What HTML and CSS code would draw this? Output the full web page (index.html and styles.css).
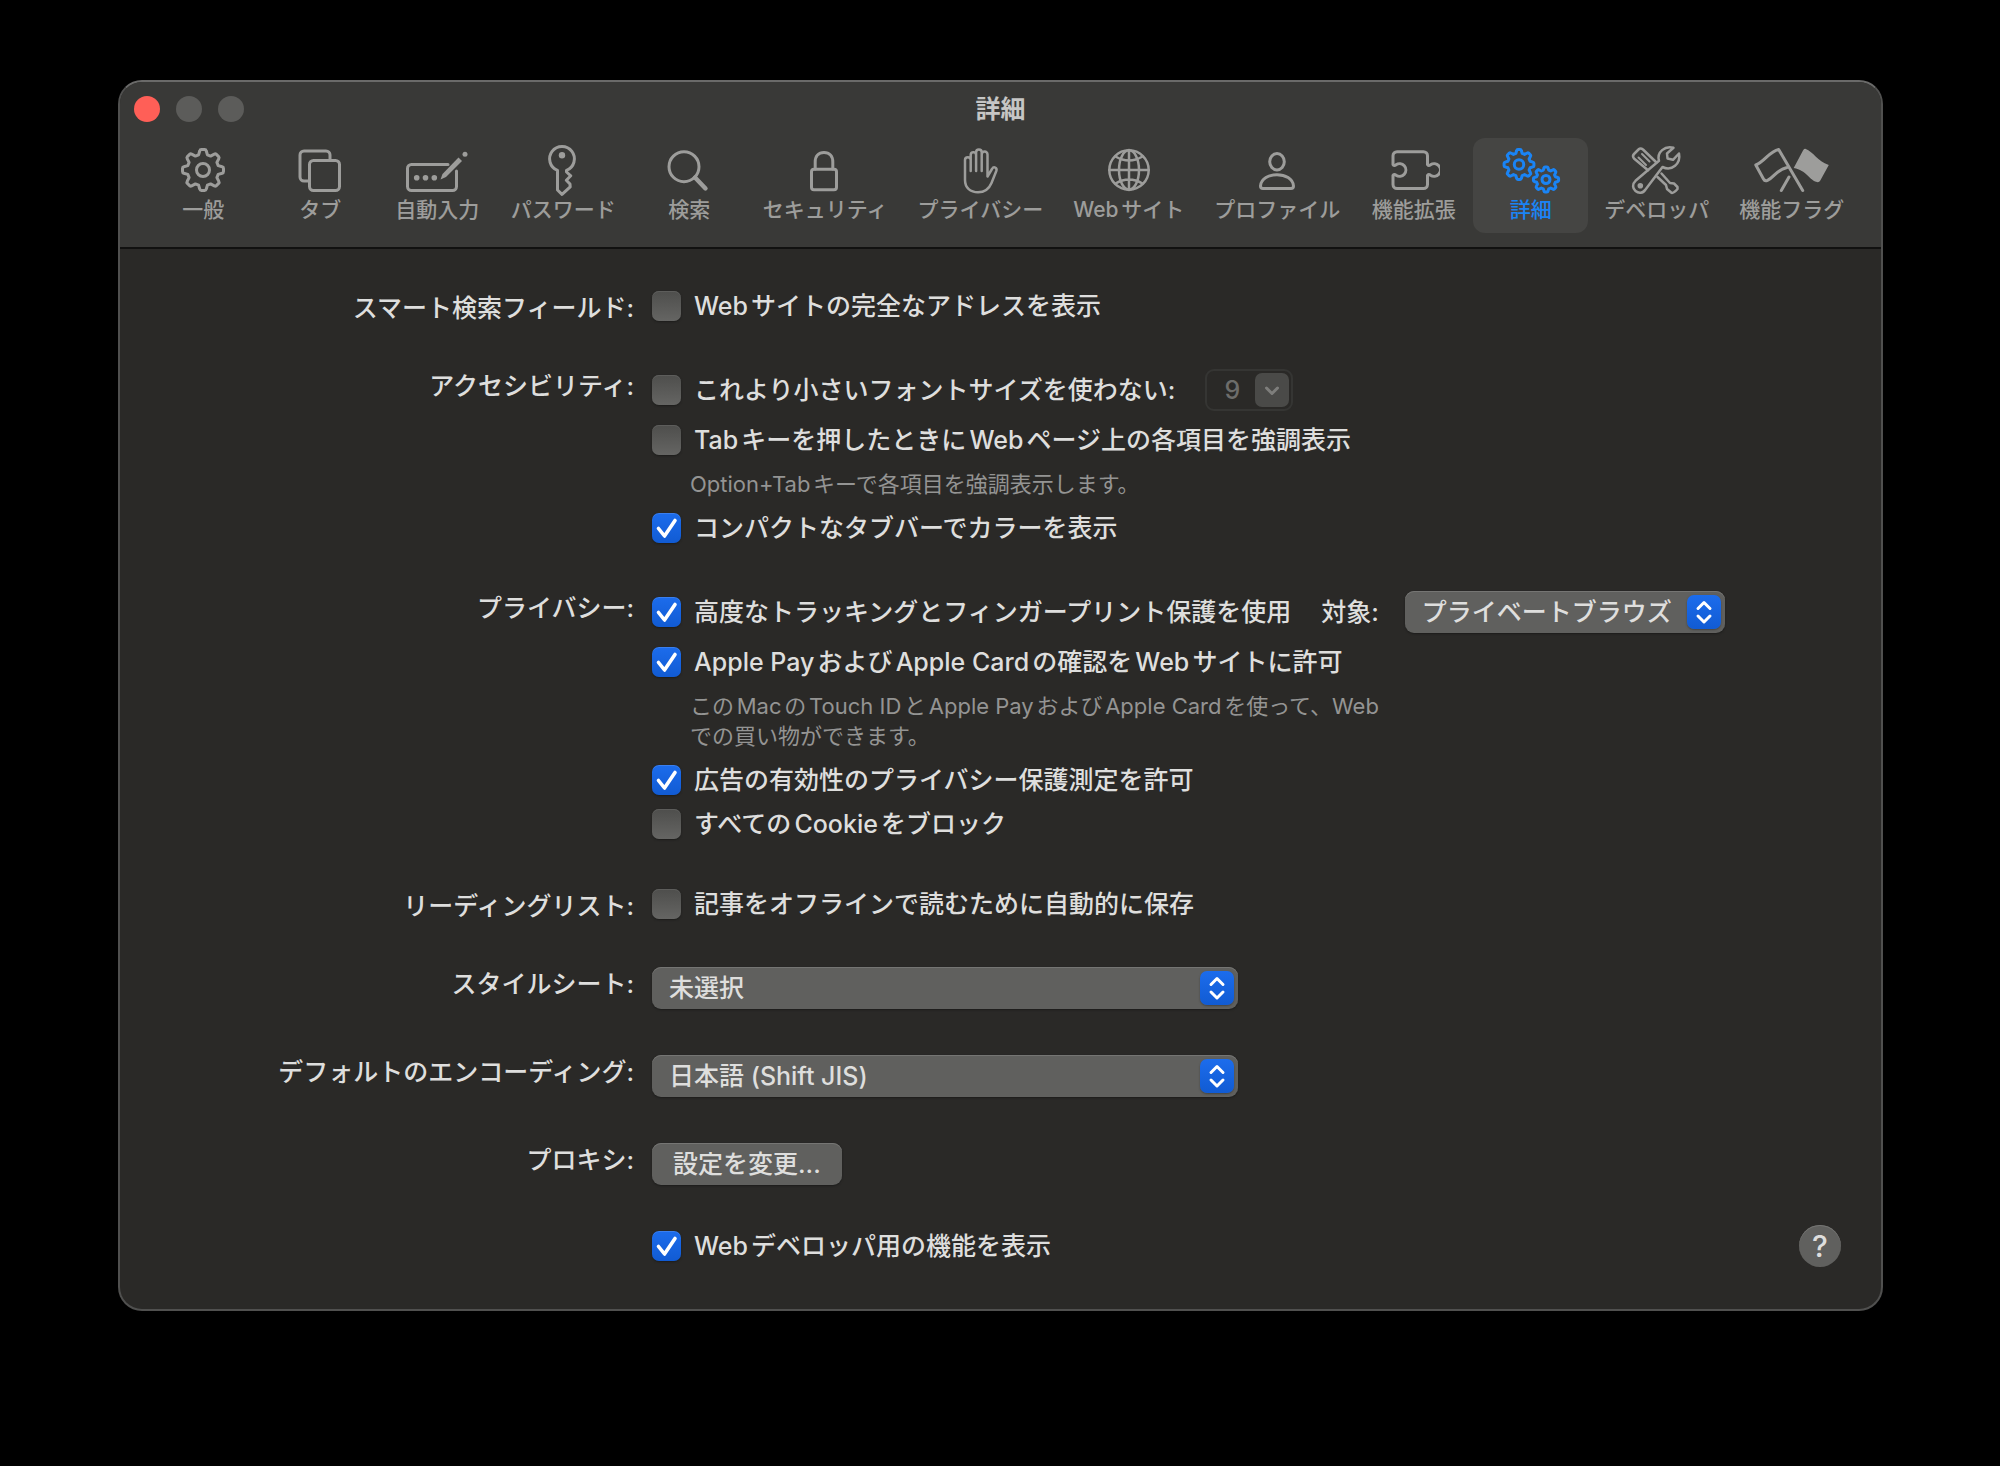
FILE: index.html
```html
<!DOCTYPE html>
<html lang="ja">
<head>
<meta charset="utf-8">
<meta name="viewport" content="width=device-width, initial-scale=1">
<title>詳細</title>
<link rel="stylesheet" href="styles.css">
</head>
<body>
<svg class="sprite" aria-hidden="true">
  <symbol id="gear" viewBox="-22 -22 44 44" overflow="visible">
    <path vector-effect="non-scaling-stroke" d="M-4.4-15.2-3.2-19.2Q-2.9-20.5-1.6-20.5H1.6Q2.9-20.5 3.2-19.2L4.4-15.2 7.6-13.9 11.3-15.8Q12.4-16.5 13.4-15.6L15.6-13.4Q16.5-12.4 15.8-11.3L13.9-7.6 15.2-4.4 19.2-3.2Q20.5-2.9 20.5-1.6V1.6Q20.5 2.9 19.2 3.2L15.2 4.4 13.9 7.6 15.8 11.3Q16.5 12.4 15.6 13.4L13.4 15.6Q12.4 16.5 11.3 15.8L7.6 13.9 4.4 15.2 3.2 19.2Q2.9 20.5 1.6 20.5H-1.6Q-2.9 20.5-3.2 19.2L-4.4 15.2-7.6 13.9-11.3 15.8Q-12.4 16.5-13.4 15.6L-15.6 13.4Q-16.5 12.4-15.8 11.3L-13.9 7.6-15.2 4.4-19.2 3.2Q-20.5 2.9-20.5 1.6V-1.6Q-20.5-2.9-19.2-3.2L-15.2-4.4-13.9-7.6-15.8-11.3Q-16.5-12.4-15.6-13.4L-13.4-15.6Q-12.4-16.5-11.3-15.8L-7.6-13.9Z"/>
    <circle vector-effect="non-scaling-stroke" r="6.5"/>
  </symbol>
  <symbol id="updown" viewBox="0 0 34 34">
    <path d="M11 13.5 17 7.5 23 13.5M11 21 17 27 23 21"/>
  </symbol>
</svg>

<main class="window">
  <header class="header">
    <div class="titlebar">
      <div class="lights">
        <button class="light light--close" type="button" aria-label="閉じる"></button>
        <button class="light" type="button" aria-label="しまう" disabled></button>
        <button class="light" type="button" aria-label="拡大" disabled></button>
      </div>
      <h1 class="title">詳細</h1>
    </div>
    <nav class="toolbar">
      <button class="tool" type="button">
        <svg class="icon" width="48" height="56" viewBox="0 0 48 56"><use href="#gear" x="2" y="6" width="44" height="44"/></svg>
        <span>一般</span>
      </button>
      <button class="tool" type="button">
        <svg class="icon" width="48" height="56" viewBox="0 0 48 56"><rect x="13.5" y="18.5" width="30" height="30" rx="4"/><path d="M13 39H8a4 4 0 0 1-4-4V13a4 4 0 0 1 4-4h22a4 4 0 0 1 4 4v5"/></svg>
        <span>タブ</span>
      </button>
      <button class="tool" type="button">
        <svg class="icon" width="64" height="56" viewBox="0 0 64 56"><path d="M43 22.5H6.5a4 4 0 0 0-4 4v18a4 4 0 0 0 4 4h41a4 4 0 0 0 4-4V29"/><g class="solid"><circle cx="11.7" cy="35.7" r="2.8"/><circle cx="20.5" cy="35.7" r="2.8"/><circle cx="29.3" cy="35.7" r="2.8"/><path d="M35.5 37.5 37.5 32 53.5 15.5 57 19 41 35Z"/><circle cx="60" cy="12.3" r="2.5"/></g></svg>
        <span>自動入力</span>
      </button>
      <button class="tool" type="button">
        <svg class="icon" width="40" height="56" viewBox="1 0 40 56"><path d="M15.5 28.4A12.4 12.4 0 1 1 24.5 28.4V30L28.8 33.8 24.3 38.2 28 42 28.2 44.8 20 52.4 15.5 48Z"/><circle class="solid" cx="20" cy="13.2" r="3.2"/></svg>
        <span>パスワード</span>
      </button>
      <button class="tool" type="button">
        <svg class="icon" width="48" height="56" viewBox="1 0 48 56"><circle cx="20" cy="24.7" r="15"/><path stroke-width="4.4" d="M31 35.5 41.5 46.5"/></svg>
        <span>検索</span>
      </button>
      <button class="tool" type="button">
        <svg class="icon" width="48" height="56" viewBox="2 0 48 56"><rect x="12.5" y="27.3" width="25" height="20.5" rx="2.5"/><path d="M16.2 27V20C16.2 14 19.5 10.5 25 10.5S33.8 14 33.8 20V27"/></svg>
        <span>セキュリティ</span>
      </button>
      <button class="tool" type="button">
        <svg class="icon icon--fine" width="48" height="56" viewBox="1 0 48 56"><path d="M15.7 29V18a2.8 2.8 0 0 0-5.7 0V38C10 46 15.5 50.3 23 50.3 30 50.3 34 47 36.5 41L41.3 29C42.5 25.5 38.7 24 37 27L32.5 34.5V12.5a2.8 2.8 0 0 0-5.8 0V29M15.7 20V13a2.7 2.7 0 0 1 5.4 0V29M21.1 14V10.3a2.8 2.8 0 0 1 5.6 0V18"/></svg>
        <span>プライバシー</span>
      </button>
      <button class="tool" type="button">
        <svg class="icon icon--fine" width="48" height="56" viewBox="0 0 48 56"><circle cx="24" cy="28" r="19.7"/><ellipse cx="24" cy="28" rx="10" ry="19.7"/><path d="M24 8V48M4.3 28H43.7M10.5 14.5Q24 22.5 37.5 14.5M10.5 41.5Q24 33.5 37.5 41.5"/></svg>
        <span>Webサイト</span>
      </button>
      <button class="tool" type="button">
        <svg class="icon" width="48" height="56" viewBox="0 0 48 56"><ellipse cx="24" cy="19.7" rx="7.3" ry="8.2"/><path d="M7.5 44C8 36.5 16 32.7 24 32.7S40 36.5 40.5 44Q40.5 46.5 38 46.5H10Q7.5 46.5 7.5 44Z"/></svg>
        <span>プロファイル</span>
      </button>
      <button class="tool" type="button">
        <svg class="icon" width="52" height="56" viewBox="0 0 52 56"><path d="M9 9.7H35.5a4 4 0 0 1 4 4V22.5Q40.5 24.5 42.5 22.8A6.3 6.3 0 1 1 42.5 33.2Q40.5 31.5 39.5 33.5V42.5a4 4 0 0 1-4 4H9a4 4 0 0 1-4-4V33.5Q6 31.5 8 33.2A6.3 6.3 0 1 0 8 22.8Q6 24.5 5 22.5V13.7a4 4 0 0 1 4-4Z"/></svg>
        <span>機能拡張</span>
      </button>
      <button class="tool tool--active" type="button" aria-current="page">
        <svg class="icon" width="60" height="56" viewBox="0 0 60 56"><use href="#gear" x="2" y="6.5" width="32" height="32"/><use href="#gear" x="31.5" y="24" width="27" height="27"/></svg>
        <span>詳細</span>
      </button>
      <button class="tool" type="button">
        <svg class="icon icon--fine" width="56" height="56" viewBox="0 0 56 56"><path d="M44.5 5.8C36 3.5 27.5 10 30 18.8L6.5 38.8C3 42 3.5 46.5 6.5 49 9.5 51.5 14 51.5 16.5 47.5L33.5 25C43 29.5 52 21.5 50 11.5L44 17.8 38.5 16.5 38 11.5Z"/><circle class="solid" cx="11.3" cy="43.7" r="2.8"/><path d="M19 28.2 5 16.5Q3 14 5 12L9.5 7.5Q11.5 5.5 14 7.5L27.5 20.5M28.5 35 37 43 38 47 42.5 50.8Q44.5 51.5 48.5 47L48.5 45 45 41.5 41 41 32.5 31.5"/><path stroke-width="2" d="M9.5 15.5 17 23M13 12 20.5 19.5"/></svg>
        <span>デベロッパ</span>
      </button>
      <button class="tool" type="button">
        <svg class="icon" width="80" height="56" viewBox="0 0 80 56"><path d="M50.7 48.5 26.7 7.5C17 9.5 13 19.5 3.8 23L11.5 37Q12.8 39.5 15.5 38.3C22 35.5 24 28 35 25.5M37 35 29.3 48.5"/><path class="solid" d="M53.3 6.7C62 10 65 19 76.8 23L68.3 38.5Q67 41 64 39.8C56 36.5 55 29 41.7 26L51 8.5Q52 6.3 53.3 6.7Z"/></svg>
        <span>機能フラグ</span>
      </button>
    </nav>
  </header>

  <form class="settings">
    <section class="group group--checks">
      <h2 class="name">スマート検索フィールド:</h2>
      <div class="rows">
        <label class="check"><input type="checkbox">Webサイトの完全なアドレスを表示</label>
      </div>
    </section>

    <section class="group group--checks">
      <h2 class="name">アクセシビリティ:</h2>
      <div class="rows">
        <div class="line">
          <label class="check"><input type="checkbox">これより小さいフォントサイズを使わない:</label>
          <span class="combo">
            <input type="text" value="9" aria-label="最小フォントサイズ" disabled>
            <button type="button" aria-label="サイズを選択" disabled><svg width="34" height="34" viewBox="0 0 34 34"><path d="M11.5 15 17 20.5 22.5 15"/></svg></button>
          </span>
        </div>
        <label class="check"><input type="checkbox">Tabキーを押したときにWebページ上の各項目を強調表示</label>
        <p class="note">Option+Tabキーで各項目を強調表示します。</p>
        <label class="check"><input type="checkbox" checked>コンパクトなタブバーでカラーを表示</label>
      </div>
    </section>

    <section class="group group--long">
      <h2 class="name">プライバシー:</h2>
      <div class="rows">
        <div class="line">
          <label class="check"><input type="checkbox" checked>高度なトラッキングとフィンガープリント保護を使用</label>
          <label class="target" for="target">対象:</label>
          <span class="popup popup--target">
            <select id="target"><option>プライベートブラウズ</option></select>
            <svg width="34" height="34" aria-hidden="true"><use href="#updown"/></svg>
          </span>
        </div>
        <label class="check"><input type="checkbox" checked>Apple PayおよびApple Cardの確認をWebサイトに許可</label>
        <p class="note">このMacのTouch IDとApple PayおよびApple Cardを使って、Web<br>での買い物ができます。</p>
        <label class="check"><input type="checkbox" checked>広告の有効性のプライバシー保護測定を許可</label>
        <label class="check"><input type="checkbox">すべてのCookieをブロック</label>
      </div>
    </section>

    <section class="group group--checks">
      <h2 class="name">リーディングリスト:</h2>
      <div class="rows">
        <label class="check"><input type="checkbox">記事をオフラインで読むために自動的に保存</label>
      </div>
    </section>

    <div class="group">
      <label class="name" for="stylesheet">スタイルシート:</label>
      <span class="popup">
        <select id="stylesheet"><option>未選択</option></select>
        <svg width="34" height="34" aria-hidden="true"><use href="#updown"/></svg>
      </span>
    </div>

    <div class="group">
      <label class="name" for="encoding">デフォルトのエンコーディング:</label>
      <span class="popup">
        <select id="encoding"><option>日本語 (Shift JIS)</option></select>
        <svg width="34" height="34" aria-hidden="true"><use href="#updown"/></svg>
      </span>
    </div>

    <section class="group">
      <h2 class="name">プロキシ:</h2>
      <div><button class="push" type="button">設定を変更...</button></div>
    </section>

    <div class="group group--last">
      <label class="check"><input type="checkbox" checked>Webデベロッパ用の機能を表示</label>
      <button class="help" type="button" aria-label="ヘルプ">?</button>
    </div>
  </form>
</main>
</body>
</html>
```
FILE: styles.css
```css
* {
  box-sizing: border-box;
}

body {
  margin: 0;
  padding: 80px 117px 80px 118px;
  background: #000;
  color: #dededd;
  font-family: "Inter", "Noto Sans CJK JP", sans-serif;
  font-size: 25px;
  font-weight: 500;
  line-height: 30px;
  text-autospace: normal;
}

button,
input,
select {
  margin: 0;
  padding: 0;
  border: 0;
  color: inherit;
  font: inherit;
}

.sprite {
  position: absolute;
  width: 0;
  height: 0;
}

.window {
  overflow: hidden;
  border: 2px solid #50504f;
  border-top-color: #6a6a69;
  border-radius: 24px;
  background: #2a2927;
}

/* Title bar and toolbar */

.header {
  padding-bottom: 14px;
  border-bottom: 2px solid #111110;
  background: #393937;
}

.titlebar {
  display: grid;
  grid-template-columns: 1fr auto 1fr;
  align-items: center;
  height: 54px;
  margin-bottom: 2px;
  padding: 0 14px;
}

.lights {
  display: flex;
  gap: 16px;
}

.light {
  width: 26px;
  height: 26px;
  border-radius: 50%;
  background: #5c5c5a;
}

.light--close {
  background: #ff5f57;
}

.title {
  margin: 0;
  color: #c6c6c5;
  font-size: 25px;
  font-weight: 700;
}

.toolbar {
  display: flex;
  justify-content: center;
  gap: 2px;
  padding-left: 3px;
}

.tool {
  display: flex;
  flex-direction: column;
  align-items: center;
  min-width: 115px;
  padding: 4px 14px 11px;
  border-radius: 12px;
  background: none;
  color: #9d9d9b;
  font-size: 21px;
  line-height: 24px;
  white-space: nowrap;
}

.tool--active {
  background: #454543;
  color: #1a84f5;
}

.icon {
  fill: none;
  stroke: currentColor;
  stroke-width: 3;
  stroke-linecap: round;
  stroke-linejoin: round;
}

.icon--fine {
  stroke-width: 2.5;
}

.solid {
  fill: currentColor;
  stroke: none;
}

/* Settings form */

.settings {
  display: flex;
  flex-direction: column;
  gap: 46px;
  padding: 42px 40px 48px 0;
}

.group {
  display: grid;
  grid-template-columns: 514px 1fr;
  column-gap: 18px;
  align-items: start;
}

.group--checks {
  margin-bottom: 2px;
}

.group--long {
  margin-bottom: 4px;
}

.group--last {
  grid-template-columns: 1fr auto;
  align-items: center;
  padding-left: 532px;
}

.name {
  margin: 0 0 -4px;
  font-size: 25px;
  font-weight: 500;
  line-height: 34px;
  text-align: right;
  white-space: nowrap;
}

.rows {
  display: flex;
  flex-direction: column;
  align-items: flex-start;
  gap: 14px;
}

.line {
  display: flex;
  align-items: center;
}

.check {
  display: flex;
  align-items: center;
  gap: 13px;
  white-space: nowrap;
}

.check input {
  appearance: none;
  flex: none;
  width: 29px;
  height: 30px;
  border-radius: 7px;
  background: linear-gradient(#4e4e4c, #656563);
  box-shadow: inset 0 1px #5d5d5b, 0 1px 2px #1c1c1b;
}

.check input:checked {
  background:
    url("data:image/svg+xml,%3Csvg xmlns='http://www.w3.org/2000/svg' viewBox='0 0 29 30'%3E%3Cpath d='M6.5 15.5 12.5 23 23 7.5' fill='none' stroke='%23fff' stroke-width='3.6' stroke-linecap='round' stroke-linejoin='round'/%3E%3C/svg%3E"),
    linear-gradient(#1c6cec, #115bd3);
  box-shadow: inset 0 1px #3a7fee, 0 1px 2px #1c1c1b;
}

.note {
  margin: 0;
  padding-left: 38px;
  color: #949493;
  font-size: 22px;
  font-weight: 400;
  line-height: 30px;
}

.target {
  margin: 0 26px 0 30px;
}

.combo {
  display: flex;
  align-items: center;
  width: 88px;
  height: 42px;
  margin-left: 30px;
  padding: 2px;
  border: 2px solid #353533;
  border-radius: 9px;
}

.combo input {
  flex: 1;
  min-width: 0;
  background: none;
  color: #6d6d6b;
  text-align: center;
}

.combo button {
  width: 34px;
  height: 34px;
  border-radius: 7px;
  background: #4a4a48;
}

.combo svg {
  display: block;
  fill: none;
  stroke: #7e7e7c;
  stroke-width: 3;
  stroke-linecap: round;
  stroke-linejoin: round;
}

.popup {
  position: relative;
  width: 586px;
}

.popup--target {
  width: 320px;
}

.popup select {
  appearance: none;
  display: block;
  width: 100%;
  height: 42px;
  padding: 0 44px 0 17px;
  border-radius: 9px;
  background: #60605e;
  box-shadow: inset 0 1px #757573, 0 1px 2px #1c1c1b;
}

.popup svg {
  position: absolute;
  top: 4px;
  right: 4px;
  border-radius: 7px;
  background: linear-gradient(#1c6cec, #115bd3);
  box-shadow: 0 1px 2px #444442;
  fill: none;
  stroke: #fff;
  stroke-width: 3;
  stroke-linecap: round;
  stroke-linejoin: round;
  pointer-events: none;
}

.push {
  height: 42px;
  padding: 0 21px;
  border-radius: 9px;
  background: #60605e;
  box-shadow: inset 0 1px #757573, 0 1px 2px #1c1c1b;
}

.help {
  width: 42px;
  height: 42px;
  margin: -6px 0;
  border-radius: 50%;
  background: #60605e;
  box-shadow: inset 0 1px #757573;
  font-size: 30px;
}
```
